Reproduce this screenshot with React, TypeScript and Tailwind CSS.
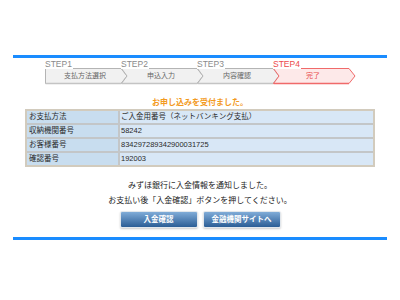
import React from 'react';

const steps = [
  { label: 'STEP1', name: '支払方法選択', active: false },
  { label: 'STEP2', name: '申込入力', active: false },
  { label: 'STEP3', name: '内容確認', active: false },
  { label: 'STEP4', name: '完了', active: true },
];

const rows = [
  { k: 'お支払方法', v: 'ご入金用番号（ネットバンキング支払）' },
  { k: '収納機関番号', v: '58242' },
  { k: 'お客様番号', v: '834297289342900031725' },
  { k: '確認番号', v: '192003' },
];

function Step({ label, name, active, first }: { label: string; name: string; active: boolean; first: boolean }) {
  const fill = active ? '#fde9e9' : '#f1f1f1';
  const stroke = active ? '#f06a6a' : '#b4b4b4';
  const pts = first ? '0.5,0.5 76,0.5 82,8 76,15.5 0.5,15.5' : '0.5,0.5 76,0.5 82,8 76,15.5 0.5,15.5 6,8';
  return (
    <div className="relative w-[76px] h-[23px] shrink-0">
      <svg className="absolute left-0 top-[7px] overflow-visible" width="83" height="16" viewBox="0 0 83 16">
        <polygon points={pts} fill={fill} stroke={stroke} strokeWidth="1" />
        <line x1="0.5" y1="15.5" x2="76" y2="15.5" stroke={active ? '#f06a6a' : '#c4c4c4'} strokeWidth="1.5" />
      </svg>
      <span className={`absolute left-0 top-[-1px] bg-white pr-[1px] text-[8.5px] leading-[9px] ${active ? 'text-[#ec4a4a]' : 'text-[#8a8a8a]'}`}>
        {label}
      </span>
      <div className={`absolute left-[4px] right-0 top-[7px] h-[16px] flex items-center justify-center text-[7px] ${active ? 'text-[#e84a4a]' : 'text-[#666]'}`}>
        {name}
      </div>
    </div>
  );
}

export default function App() {
  return (
    <div className="w-[400px] h-[300px] bg-white overflow-hidden font-['Liberation_Sans','Noto_Sans_CJK_JP',sans-serif]">
      <div className="h-[55px]" />
      <div className="mx-[13px] h-[3px] bg-[#1a8cff]" />

      {/* steps */}
      <div className="mt-[3px] ml-[45px] flex">
        {steps.map((s, i) => (
          <Step key={s.label} {...s} first={i === 0} />
        ))}
      </div>

      <div className="mt-[14px] h-[10px] text-center text-[8px] leading-[10px] font-bold text-[#f39a1e]">
        お申し込みを受付ました。
      </div>

      {/* table */}
      <div className="mt-[1px] mx-[25px] border-2 border-[#d2cbbd] bg-[#c3c6c8] grid grid-cols-[91px_1fr] gap-[2px] text-[7.5px] text-[#2a2a2a]">
        {rows.map((r) => (
          <React.Fragment key={r.k}>
            <div className="h-[12px] leading-[12px] pl-[2px] bg-[#c8ddef]">{r.k}</div>
            <div className="h-[12px] leading-[12px] pl-[1px] bg-[#d8e7f6]">{r.v}</div>
          </React.Fragment>
        ))}
      </div>

      <div className="mt-[11px] text-center text-[8px] leading-[15px] text-[#222]">
        <p>みずほ銀行に入金情報を通知しました。</p>
        <p>お支払い後「入金確認」ボタンを押してください。</p>
      </div>

      <div className="mt-[3px] flex justify-center gap-[5px]">
        <button className="w-[78px] h-[17px] rounded-[2px] border border-[#e2e7ec] bg-gradient-to-b from-[#80acd8] to-[#2b5e96] text-white text-[7.5px] font-bold shadow-[0_1px_2px_rgba(0,0,0,0.2)]">
          入金確認
        </button>
        <button className="w-[78px] h-[17px] rounded-[2px] border border-[#e2e7ec] bg-gradient-to-b from-[#80acd8] to-[#2b5e96] text-white text-[7.5px] font-bold shadow-[0_1px_2px_rgba(0,0,0,0.2)]">
          金融機関サイトへ
        </button>
      </div>

      <div className="mt-[9px] mx-[13px] h-[3px] bg-[#1a8cff]" />
    </div>
  );
}
